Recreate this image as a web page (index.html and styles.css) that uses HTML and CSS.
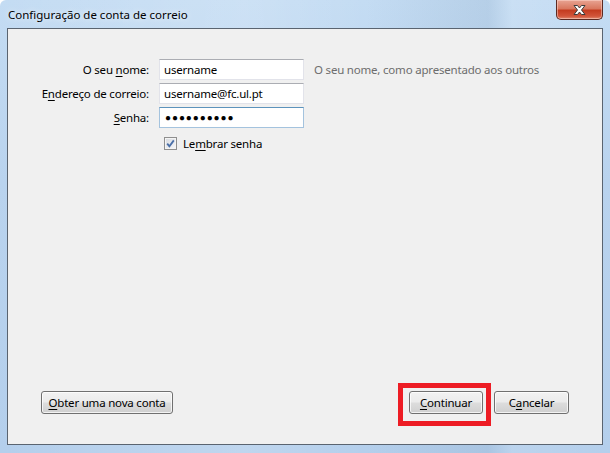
FILE: index.html
```html
<!DOCTYPE html>
<html lang="pt">
<head>
<meta charset="utf-8">
<title>Configuração de conta de correio</title>
<link rel="stylesheet" href="styles.css">
</head>
<body>
<div class="window">
  <div class="titlebar">
    <span class="title">Configuração de conta de correio</span>
    <button class="close" aria-label="Fechar">
      <svg width="15" height="12" viewBox="0 0 15 12">
        <path d="M2 1.5 L5.5 1.5 L7.5 4 L9.5 1.5 L13 1.5 L9.5 6 L13 10.5 L9.5 10.5 L7.5 8 L5.5 10.5 L2 10.5 L5.5 6 Z" fill="#ffffff" stroke="#3b3b3b" stroke-width="1" stroke-linejoin="round"/>
      </svg>
    </button>
  </div>
  <div class="client">
    <div class="form">
      <label class="lbl">O seu <u>n</u>ome:</label>
      <div class="input">username</div>
      <span class="hint">O seu nome, como apresentado aos outros</span>

      <label class="lbl">E<u>n</u>dereço de correio:</label>
      <div class="input">username@fc.ul.pt</div>
      <span></span>

      <label class="lbl"><u>S</u>enha:</label>
      <div class="input focused dots">●●●●●●●●●●</div>
      <span></span>

      <span></span>
      <div class="check-row">
        <span class="checkbox">
          <svg width="9" height="9" viewBox="0 0 9 9"><path d="M1.2 4.6 L3.4 7.2 L7.8 1.4" fill="none" stroke="#4a6fa8" stroke-width="1.8"/></svg>
        </span>
        <span>Le<u>m</u>brar senha</span>
      </div>
      <span></span>
    </div>
    <div class="footer">
      <button class="btn wide"><u>O</u>bter uma nova conta</button>
      <div class="right-buttons">
        <div class="marked">
          <button class="btn cont"><u>C</u>ontinuar</button>
          <span class="highlight"></span>
        </div>
        <button class="btn cancel">C<u>a</u>ncelar</button>
      </div>
    </div>
  </div>
</div>
</body>
</html>
```
FILE: styles.css
```css
* { box-sizing: border-box; }
html, body { margin: 0; padding: 0; }
body {
  width: 610px;
  height: 453px;
  overflow: hidden;
  font-family: "Noto Sans", "Open Sans", sans-serif;
  font-size: 11.5px;
  letter-spacing: -0.2px;
  color: #000;
}
u { text-decoration: underline; text-underline-offset: 2px; }
.window {
  width: 610px;
  height: 453px;
  display: flex;
  flex-direction: column;
  padding: 0 7px 8px 7px;
  background:
    linear-gradient(90deg, rgba(255,255,255,0) 0%, rgba(255,255,255,0.15) 40%, rgba(255,255,255,0) 60%, rgba(120,150,180,0.18) 80%, rgba(255,255,255,0.1) 84%, rgba(255,255,255,0) 100%),
    linear-gradient(180deg, #c4dcf3 0%, #b9d3ee 40%, #b4cfec 100%);
  border-radius: 6px 6px 0 0;
}
.titlebar {
  height: 28px;
  display: flex;
  align-items: flex-start;
  justify-content: space-between;
  flex: none;
}
.title {
  margin-top: 7px;
  padding-left: 1px;
  letter-spacing: 0;
  color: #000;
  text-shadow: 0 0 6px rgba(255,255,255,0.9);
}
.close {
  width: 47px;
  height: 20px;
  margin-right: 0;
  border: 1px solid #5c2a22;
  border-top: none;
  border-radius: 0 0 5px 5px;
  background: linear-gradient(180deg, #e8a493 0%, #d9785f 45%, #c43c20 55%, #d2553a 85%, #e08a70 100%);
  box-shadow: inset 0 0 0 1px rgba(255,220,210,0.5);
  padding: 0;
  display: flex;
  align-items: center;
  justify-content: center;
}
.client {
  flex: 1;
  background: #f0f0f0;
  border: 1px solid #5a6470;
  display: flex;
  flex-direction: column;
  justify-content: space-between;
}
.form {
  display: grid;
  grid-template-columns: 141px 145px auto;
  column-gap: 10px;
  row-gap: 3px;
  grid-auto-rows: 21px;
  padding-top: 30px;
  align-items: center;
}
.lbl {
  text-align: right;
  white-space: nowrap;
}
.input {
  height: 21px;
  background: #fff;
  border: 1px solid #e2e3ea;
  border-top-color: #abadb3;
  padding: 0 0 0 4px;
  line-height: 19px;
  white-space: nowrap;
}
.input.focused {
  border: 1px solid #569de5;
  border-color: #5c93bc #a4c3de #a4c3de #a4c3de;
}
.dots {
  font-size: 10px;
  letter-spacing: 0.9px;
  padding-left: 5px;
}
.hint {
  color: #6d6d6d;
  white-space: nowrap;
}
.check-row {
  display: flex;
  align-items: center;
  gap: 6px;
  padding-left: 5px;
  padding-top: 4px;
  white-space: nowrap;
}
.checkbox {
  width: 13px;
  height: 13px;
  border: 1px solid #8f8f8f;
  background: linear-gradient(135deg, #d6d9de, #f7f8fa);
  box-shadow: inset 0 0 0 1px #f4f4f4;
  display: flex;
  align-items: center;
  justify-content: center;
  flex: none;
}
.footer {
  display: flex;
  justify-content: space-between;
  align-items: center;
  padding: 0 33px 30px 33px;
}
.right-buttons {
  display: flex;
  gap: 11px;
}
.marked { position: relative; }
.highlight {
  position: absolute;
  left: -11px;
  right: -8px;
  top: -8px;
  bottom: -12px;
  border: 5px solid #ed1c24;
  pointer-events: none;
}
.btn {
  height: 23px;
  padding: 0;
  font-family: inherit;
  font-size: 11.5px;
  letter-spacing: -0.2px;
  color: #000;
  border: 1px solid #707070;
  border-radius: 3px;
  background: linear-gradient(180deg, #f2f2f2 0%, #ebebeb 48%, #dddddd 52%, #cfcfcf 100%);
  box-shadow: inset 0 0 0 1px rgba(255,255,255,0.75);
  display: block;
  white-space: nowrap;
}
.btn.wide { width: 132px; }
.btn.cont { width: 74px; }
.btn.cancel { width: 75px; }
```
